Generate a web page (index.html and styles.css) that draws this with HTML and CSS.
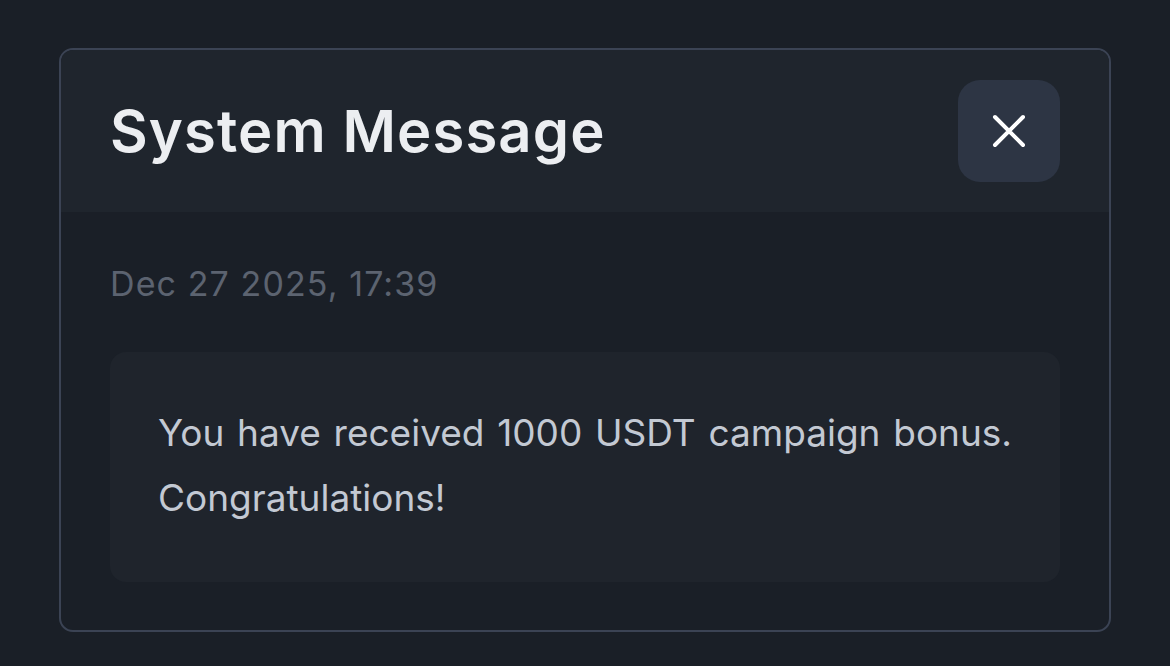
FILE: index.html
```html
<!DOCTYPE html>
<html lang="en">
<head>
<meta charset="utf-8">
<title>System Message</title>
<link rel="stylesheet" href="styles.css">
</head>
<body>
<div class="page">
  <div class="card">
    <div class="card-header">
      <h1 class="title">System Message</h1>
      <button class="close-btn" aria-label="Close">
        <svg width="34" height="34" viewBox="0 0 34 34" fill="none">
          <path d="M3 3L31 31M31 3L3 31" stroke="#ffffff" stroke-width="4" stroke-linecap="round"/>
        </svg>
      </button>
    </div>
    <div class="card-body">
      <div class="date">Dec 27 2025, 17:39</div>
      <div class="message">
        <p>You have received 1000 USDT campaign bonus. Congratulations!</p>
      </div>
    </div>
  </div>
</div>
</body>
</html>
```
FILE: styles.css
```css
* { box-sizing: border-box; }
html, body {
  margin: 0;
  background: #1a1f27;
  font-family: "Inter", "Noto Sans", sans-serif;
}
.page {
  padding: 48px 59px;
}
.card {
  border: 2px solid #3b4354;
  border-radius: 14px;
  background: #1a1f27;
  overflow: hidden;
}
.card-header {
  background: #1f252d;
  display: flex;
  align-items: center;
  justify-content: space-between;
  padding: 30px 49px;
}
.title {
  margin: 0;
  font-size: 58px;
  font-weight: 600;
  color: #eceef1;
  letter-spacing: 1.1px;
}
.close-btn {
  width: 102px;
  height: 102px;
  border: none;
  border-radius: 22px;
  background: #2d3544;
  display: flex;
  align-items: center;
  justify-content: center;
  padding: 0;
}
.card-body {
  padding: 51px 49px 48px;
}
.date {
  font-size: 34px;
  color: #5c6370;
  line-height: 41px;
  letter-spacing: 1.1px;
}
.message {
  margin-top: 48px;
  background: #1f242c;
  border-radius: 16px;
  padding: 48px 48px 52px;
}
.message p {
  margin: 0;
  font-size: 37px;
  line-height: 65px;
  color: #c3c9d3;
  text-align: justify;
  text-align-last: left;
}
```
